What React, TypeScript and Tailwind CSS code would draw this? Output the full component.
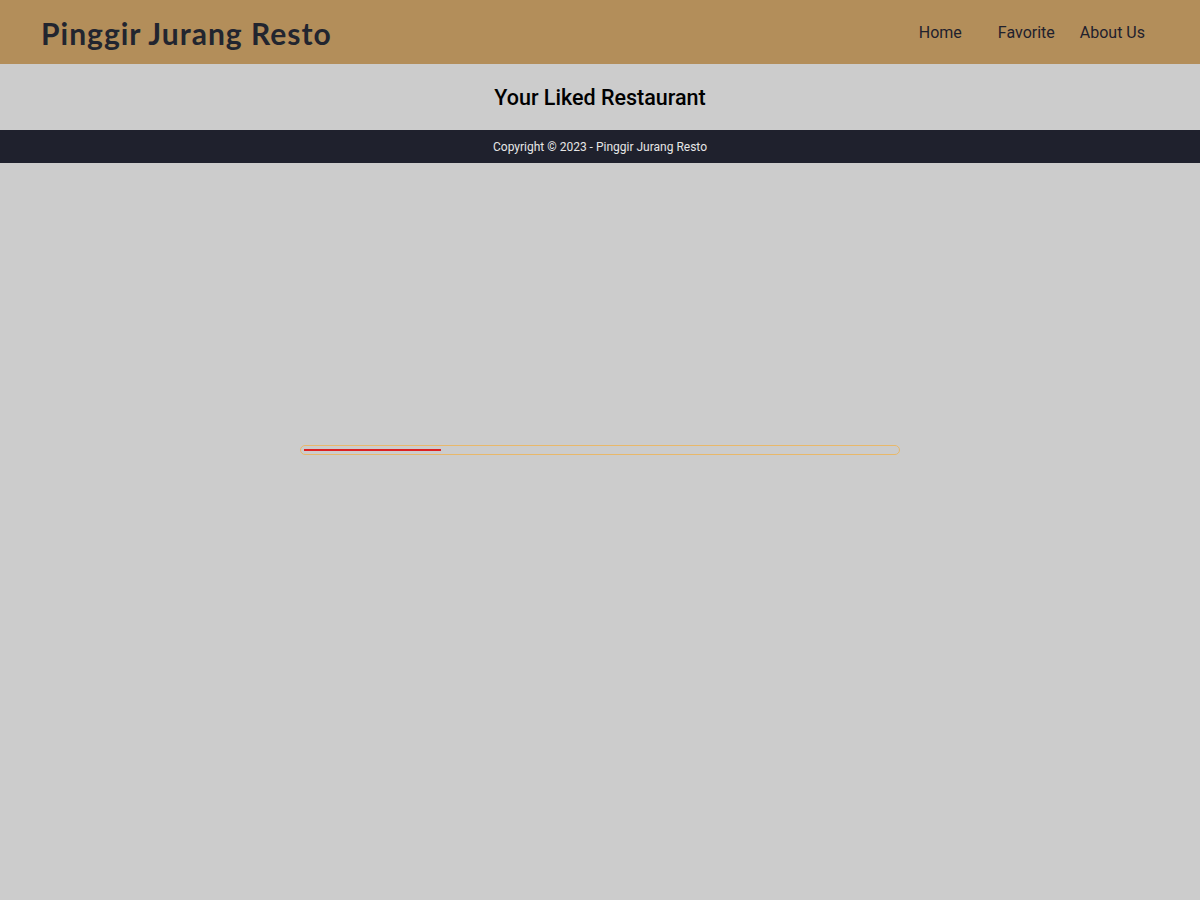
export default function App() {
  return (
    <div className="min-h-screen bg-[#cccccc] font-['Roboto',sans-serif] text-[#1f212d]">
      <header className="h-16 bg-[#b38e5a] flex items-center justify-between pl-[41px] pr-[55px]">
        <h1 className="text-[30px] font-bold tracking-[1px] font-['Lato',sans-serif] text-[#22252f] pt-[2px]">
          Pinggir Jurang Resto
        </h1>
        <nav className="flex items-center text-base pt-[2px]">
          <a href="#/home" className="mr-9">Home</a>
          <a href="#/favorite" className="mr-[25px]">Favorite</a>
          <a href="#/about">About Us</a>
        </nav>
      </header>

      <main className="h-[66px] flex items-center justify-center">
        <h2 className="text-[21.5px] font-medium text-black pt-[2px]">Your Liked Restaurant</h2>
      </main>

      <footer className="h-[33px] bg-[#1f212d] flex items-center justify-center">
        <p className="text-xs text-[#e6e6e6]">Copyright © 2023 - Pinggir Jurang Resto</p>
      </footer>

      {/* loading overlay */}
      <div className="fixed inset-0 flex items-center justify-center pointer-events-none">
        <div className="w-[600px] h-[10px] border border-[#e8b86a] rounded-[5px] px-[3px] flex items-center">
          <div className="h-[2px] w-[137px] bg-[#dd2020]" />
        </div>
      </div>
    </div>
  );
}
